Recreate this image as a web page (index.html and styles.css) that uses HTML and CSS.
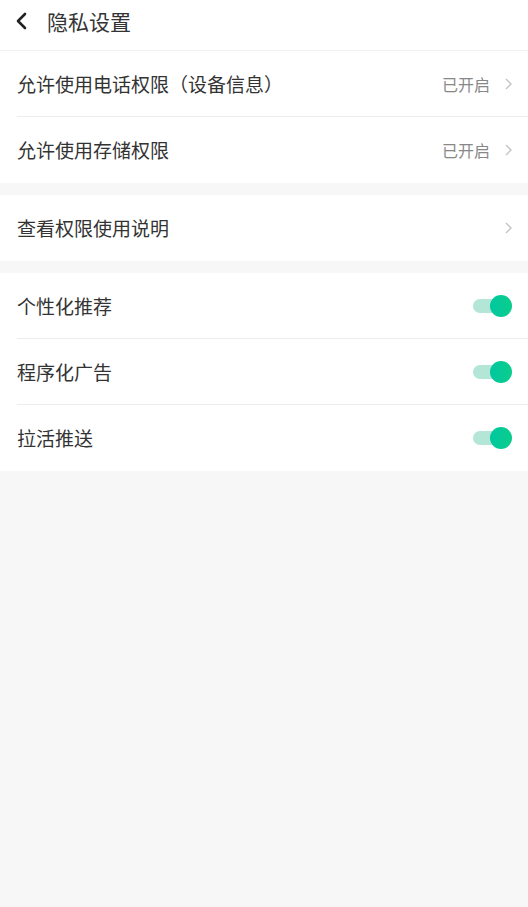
FILE: index.html
```html
<!DOCTYPE html>
<html lang="zh-CN">
<head>
<meta charset="utf-8">
<title>隐私设置</title>
<link rel="stylesheet" href="styles.css">
</head>
<body>
<header class="topbar">
  <span class="back">
    <svg width="14" height="18" viewBox="0 0 14 18"><path d="M11 2 L4 9 L11 16" fill="none" stroke="#222" stroke-width="2.6" stroke-linecap="round" stroke-linejoin="round"/></svg>
  </span>
  <h1 class="title">隐私设置</h1>
</header>

<section class="group">
  <div class="row">
    <span class="label">允许使用电话权限（设备信息）</span>
    <span class="value">已开启</span>
    <svg class="chev" width="9" height="14" viewBox="0 0 9 14"><path d="M2 2 L7 7 L2 12" fill="none" stroke="#c4c4c4" stroke-width="1.4"/></svg>
  </div>
  <div class="row">
    <span class="label">允许使用存储权限</span>
    <span class="value">已开启</span>
    <svg class="chev" width="9" height="14" viewBox="0 0 9 14"><path d="M2 2 L7 7 L2 12" fill="none" stroke="#c4c4c4" stroke-width="1.4"/></svg>
  </div>
</section>

<section class="group">
  <div class="row">
    <span class="label">查看权限使用说明</span>
    <svg class="chev" width="9" height="14" viewBox="0 0 9 14"><path d="M2 2 L7 7 L2 12" fill="none" stroke="#c4c4c4" stroke-width="1.4"/></svg>
  </div>
</section>

<section class="group">
  <div class="row">
    <span class="label">个性化推荐</span>
    <span class="switch"><span class="track"></span><span class="knob"></span></span>
  </div>
  <div class="row">
    <span class="label">程序化广告</span>
    <span class="switch"><span class="track"></span><span class="knob"></span></span>
  </div>
  <div class="row">
    <span class="label">拉活推送</span>
    <span class="switch"><span class="track"></span><span class="knob"></span></span>
  </div>
</section>
</body>
</html>
```
FILE: styles.css
```css
html, body {
  margin: 0;
  padding: 0;
  background: #f7f7f7;
  font-family: "Noto Sans CJK SC", "Noto Sans", sans-serif;
  color: #333;
}
.topbar {
  height: 51px;
  box-sizing: border-box;
  background: #fff;
  border-bottom: 1px solid #f1f1f1;
  display: flex;
  align-items: center;
  padding-left: 14px;
}
.back {
  display: flex;
  width: 14px;
  height: 18px;
  margin-top: -8px;
}
.title {
  margin: -8px 0 0 19px;
  font-size: 21px;
  font-weight: 400;
  color: #333;
}
.group {
  background: #fff;
  margin-bottom: 12px;
}
.row {
  display: flex;
  align-items: center;
  height: 66px;
  box-sizing: border-box;
  margin-left: 17px;
  padding-right: 16px;
  border-bottom: 1px solid #ececec;
}
.row:last-child {
  border-bottom-color: transparent;
}
.label {
  flex: 1;
  font-size: 19px;
  color: #333;
}
.value {
  font-size: 16px;
  color: #888;
  margin-right: 14px;
}
.chev {
  display: block;
  margin-right: -1px;
}
.switch {
  position: relative;
  width: 40px;
  height: 22px;
}
.track {
  position: absolute;
  left: 1px;
  top: 4px;
  width: 30px;
  height: 14px;
  border-radius: 7px;
  background: #b3e6d6;
}
.knob {
  position: absolute;
  right: 0;
  top: 0;
  width: 22px;
  height: 22px;
  border-radius: 50%;
  background: linear-gradient(90deg, #00c79f, #0ccd8c);
}
```
